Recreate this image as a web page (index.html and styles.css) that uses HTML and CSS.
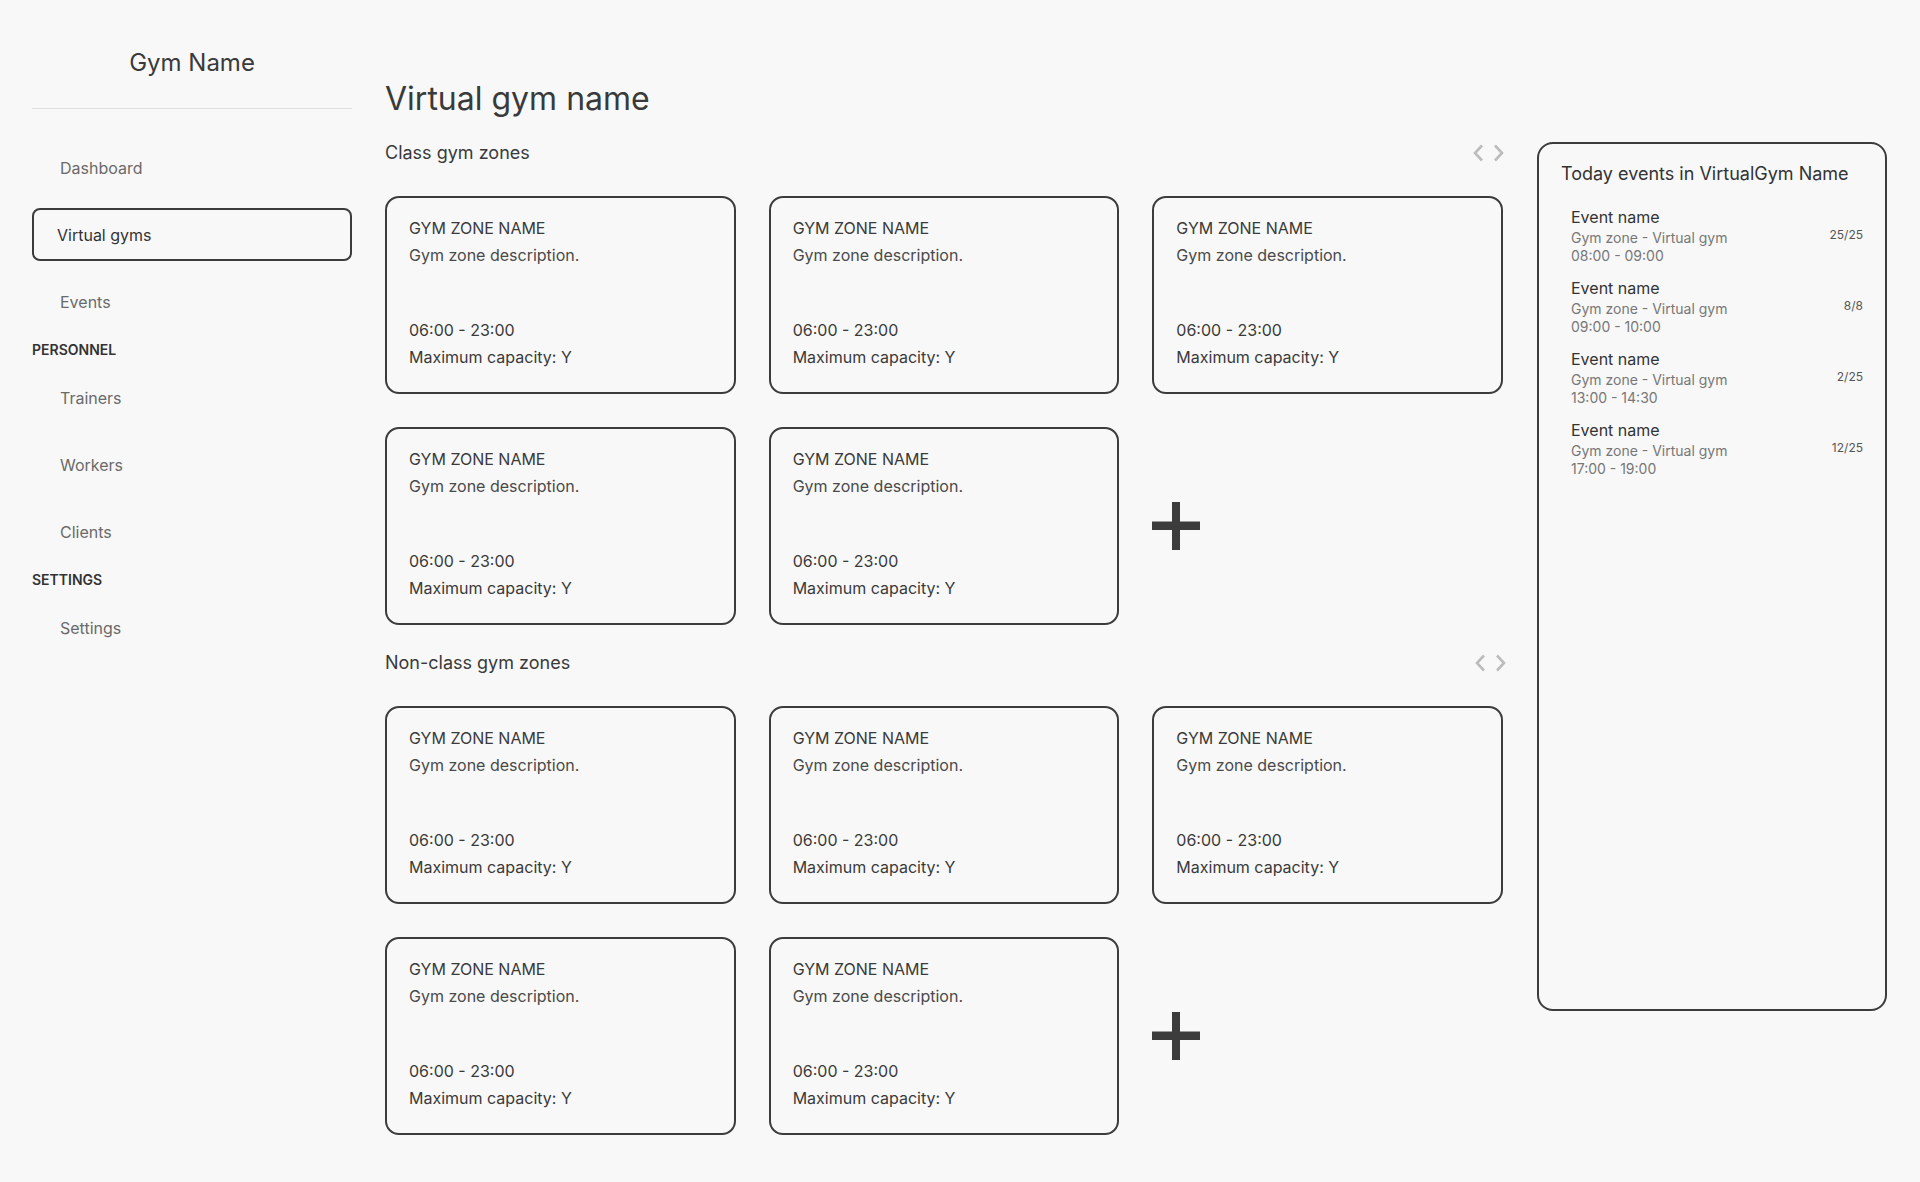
FILE: index.html
```html
<!DOCTYPE html>
<html lang="en">
<head>
<meta charset="utf-8">
<title>Virtual gym name</title>
<link rel="stylesheet" href="styles.css">
</head>
<body>
<div class="app">
  <aside class="sidebar">
    <div class="brand">Gym Name</div>
    <nav class="nav">
      <a class="nav-item">Dashboard</a>
      <a class="nav-item nav-item--active">Virtual gyms</a>
      <a class="nav-item">Events</a>
      <div class="nav-header">PERSONNEL</div>
      <a class="nav-item">Trainers</a>
      <a class="nav-item">Workers</a>
      <a class="nav-item">Clients</a>
      <div class="nav-header">SETTINGS</div>
      <a class="nav-item">Settings</a>
    </nav>
  </aside>

  <main class="main">
    <h1 class="page-title">Virtual gym name</h1>
    <div class="main-row">
      <div class="zones">
        <section class="zone-section">
          <div class="section-head">
            <h2 class="section-title">Class gym zones</h2>
            <svg class="pager" width="31" height="18" viewBox="0 0 31 18"><polyline points="9,1.5 2,9 9,16.5"/><polyline points="22,1.5 29,9 22,16.5"/></svg>
          </div>
          <div class="card-grid">
            <div class="card"><div class="card-top"><div class="card-name">GYM ZONE NAME</div><div class="card-desc">Gym zone description.</div></div><div class="card-bottom"><div>06:00 - 23:00</div><div>Maximum capacity: Y</div></div></div>
            <div class="card"><div class="card-top"><div class="card-name">GYM ZONE NAME</div><div class="card-desc">Gym zone description.</div></div><div class="card-bottom"><div>06:00 - 23:00</div><div>Maximum capacity: Y</div></div></div>
            <div class="card"><div class="card-top"><div class="card-name">GYM ZONE NAME</div><div class="card-desc">Gym zone description.</div></div><div class="card-bottom"><div>06:00 - 23:00</div><div>Maximum capacity: Y</div></div></div>
            <div class="card"><div class="card-top"><div class="card-name">GYM ZONE NAME</div><div class="card-desc">Gym zone description.</div></div><div class="card-bottom"><div>06:00 - 23:00</div><div>Maximum capacity: Y</div></div></div>
            <div class="card"><div class="card-top"><div class="card-name">GYM ZONE NAME</div><div class="card-desc">Gym zone description.</div></div><div class="card-bottom"><div>06:00 - 23:00</div><div>Maximum capacity: Y</div></div></div>
            <div class="add-cell"><svg class="plus" width="48" height="48" viewBox="0 0 48 48"><rect x="20" y="0" width="8" height="48"/><rect x="0" y="19.5" width="48" height="8.5"/></svg></div>
          </div>
        </section>

        <section class="zone-section zone-section--second">
          <div class="section-head">
            <h2 class="section-title">Non-class gym zones</h2>
            <svg class="pager pager--shift" width="31" height="18" viewBox="0 0 31 18"><polyline points="9,1.5 2,9 9,16.5"/><polyline points="22,1.5 29,9 22,16.5"/></svg>
          </div>
          <div class="card-grid">
            <div class="card"><div class="card-top"><div class="card-name">GYM ZONE NAME</div><div class="card-desc">Gym zone description.</div></div><div class="card-bottom"><div>06:00 - 23:00</div><div>Maximum capacity: Y</div></div></div>
            <div class="card"><div class="card-top"><div class="card-name">GYM ZONE NAME</div><div class="card-desc">Gym zone description.</div></div><div class="card-bottom"><div>06:00 - 23:00</div><div>Maximum capacity: Y</div></div></div>
            <div class="card"><div class="card-top"><div class="card-name">GYM ZONE NAME</div><div class="card-desc">Gym zone description.</div></div><div class="card-bottom"><div>06:00 - 23:00</div><div>Maximum capacity: Y</div></div></div>
            <div class="card"><div class="card-top"><div class="card-name">GYM ZONE NAME</div><div class="card-desc">Gym zone description.</div></div><div class="card-bottom"><div>06:00 - 23:00</div><div>Maximum capacity: Y</div></div></div>
            <div class="card"><div class="card-top"><div class="card-name">GYM ZONE NAME</div><div class="card-desc">Gym zone description.</div></div><div class="card-bottom"><div>06:00 - 23:00</div><div>Maximum capacity: Y</div></div></div>
            <div class="add-cell"><svg class="plus" width="48" height="48" viewBox="0 0 48 48"><rect x="20" y="0" width="8" height="48"/><rect x="0" y="19.5" width="48" height="8.5"/></svg></div>
          </div>
        </section>
      </div>

      <aside class="events">
        <h3 class="events-title">Today events in VirtualGym Name</h3>
        <ul class="event-list">
          <li class="event"><div class="event-info"><div class="event-name">Event name</div><div class="event-meta">Gym zone - Virtual gym<br>08:00 - 09:00</div></div><div class="event-count">25/25</div></li>
          <li class="event"><div class="event-info"><div class="event-name">Event name</div><div class="event-meta">Gym zone - Virtual gym<br>09:00 - 10:00</div></div><div class="event-count">8/8</div></li>
          <li class="event"><div class="event-info"><div class="event-name">Event name</div><div class="event-meta">Gym zone - Virtual gym<br>13:00 - 14:30</div></div><div class="event-count">2/25</div></li>
          <li class="event"><div class="event-info"><div class="event-name">Event name</div><div class="event-meta">Gym zone - Virtual gym<br>17:00 - 19:00</div></div><div class="event-count">12/25</div></li>
        </ul>
      </aside>
    </div>
  </main>
</div>
</body>
</html>
```

FILE: styles.css
```css
* { box-sizing: border-box; }

html, body {
  margin: 0;
  padding: 0;
  background: #f8f8f8;
  font-family: Inter, "Noto Sans", "Liberation Sans", sans-serif;
  color: #3a3a3a;
}

.app {
  display: flex;
  gap: 33px;
  padding: 0 33px 0 32px;
  min-height: 1182px;
}

/* Sidebar */
.sidebar {
  width: 320px;
  flex: none;
  padding-top: 48px;
}

.brand {
  font-size: 24px;
  line-height: 29px;
  text-align: center;
  color: #3a3a3a;
  padding-bottom: 31px;
  border-bottom: 1px solid #dedede;
}

.nav {
  display: flex;
  flex-direction: column;
  gap: 14px;
  margin-top: 32px;
}

.nav-item {
  display: flex;
  align-items: center;
  height: 53px;
  padding-left: 26px;
  border: 2px solid transparent;
  border-radius: 8px;
  font-size: 16px;
  color: #6a6a6a;
}

.nav-item--active {
  border-color: #3c3c3c;
  color: #333;
  padding-left: 23px;
}

.nav-header {
  font-size: 14px;
  line-height: 15px;
  font-weight: 600;
  color: #333;
}

/* Main */
.main {
  flex: 1;
  padding-top: 79px;
}

.page-title {
  margin: 0 0 24px;
  font-size: 32px;
  line-height: 39px;
  font-weight: 400;
  color: #3a3a3a;
}

.main-row {
  display: flex;
  gap: 34px;
  align-items: flex-start;
}

.zones {
  width: 1118px;
  flex: none;
}

.zone-section--second {
  margin-top: 27px;
}

.section-head {
  display: flex;
  align-items: center;
  justify-content: space-between;
  height: 22px;
}

.section-title {
  margin: 0;
  font-size: 18px;
  line-height: 22px;
  font-weight: 400;
  color: #3a3a3a;
}

.pager {
  fill: none;
  stroke: #bcbcbc;
  stroke-width: 2.6;
  margin-right: -1px;
}

.pager--shift {
  margin-right: -3px;
}

.card-grid {
  margin-top: 32px;
  display: grid;
  grid-template-columns: repeat(3, 1fr);
  grid-auto-rows: 198px;
  gap: 33px;
}

.card {
  border: 2px solid #3c3c3c;
  border-radius: 14px;
  padding: 17px 22px 21px;
  display: flex;
  flex-direction: column;
  justify-content: space-between;
  font-size: 16px;
  line-height: 27px;
  color: #3a3a3a;
}

.card-desc {
  color: #4a4a4a;
}

.add-cell {
  display: flex;
  align-items: center;
}

.plus {
  fill: #3c3c3c;
}

/* Events panel */
.events {
  width: 350px;
  flex: none;
  height: 869px;
  border: 2px solid #3c3c3c;
  border-radius: 16px;
  padding: 19px 22px;
}

.events-title {
  margin: 0;
  font-size: 18px;
  line-height: 22px;
  font-weight: 400;
  color: #333;
}

.event-list {
  list-style: none;
  margin: 22px 0 0;
  padding: 0;
  display: flex;
  flex-direction: column;
  gap: 13px;
}

.event {
  display: flex;
  align-items: center;
  justify-content: space-between;
  padding-left: 10px;
}

.event-name {
  font-size: 16px;
  line-height: 20px;
  font-weight: 400;
  color: #333;
}

.event-meta {
  margin-top: 2px;
  font-size: 14px;
  line-height: 18px;
  color: #777;
}

.event-count {
  font-size: 12px;
  color: #555;
  margin-bottom: 3px;
}
```
